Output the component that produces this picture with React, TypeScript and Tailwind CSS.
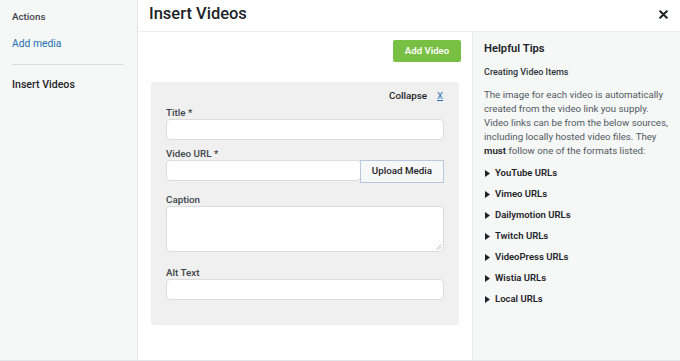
import React from "react";

const tips = [
  "YouTube URLs",
  "Vimeo URLs",
  "Dailymotion URLs",
  "Twitch URLs",
  "VideoPress URLs",
  "Wistia URLs",
  "Local URLs",
];

export default function App() {
  return (
    <div
      className="w-[680px] h-[361px] flex bg-white border-b border-[#e2e4e7] overflow-hidden text-[#1d2327]"
      style={{ fontFamily: "Roboto, 'Liberation Sans', sans-serif" }}
    >
      {/* Sidebar */}
      <div className="w-[138px] shrink-0 bg-[#f6f7f7] border-r border-[#e2e4e7] px-3 pt-[10px]">
        <div className="text-[9.8px] font-medium leading-[14px] text-[#3c434a]">Actions</div>
        <div className="mt-[13px] text-[10.3px] leading-[14px] text-[#2271b1]">Add media</div>
        <div className="mt-[13px] h-px bg-[#dcdcde] mr-[2px]" />
        <div className="mt-[13px] text-[10.6px] leading-[14px] font-medium text-[#1d2327]">Insert Videos</div>
      </div>

      {/* Main */}
      <div className="flex-1 flex flex-col">
        <div className="h-[32px] shrink-0 border-b border-[#f0f0f1] flex items-center justify-between pl-[11px] pr-[13px]">
          <h1 className="text-[16.5px] font-medium leading-none pb-[2px]">Insert Videos</h1>
          <svg width="9" height="9" viewBox="0 0 9 9" className="mb-[2px] mr-[-1px]">
            <path d="M1.2 1.2 L7.8 7.8 M7.8 1.2 L1.2 7.8" stroke="#1d2327" strokeWidth="2" strokeLinecap="round" />
          </svg>
        </div>

        <div className="flex-1 flex">
          {/* Left pane */}
          <div className="flex-1 px-[13px] pt-[8px]">
            <div className="flex justify-end mr-[-2px]">
              <button className="h-[22px] w-[68px] rounded-[2px] bg-[#77c043] text-white text-[9.6px] font-semibold">
                Add Video
              </button>
            </div>
            <div className="mt-[20px] bg-[#f0f0f1] rounded-[2px] px-[15px] pt-[7px] pb-[25px]">
              <div className="flex justify-end items-center h-[14px] pr-[1px]">
                <span className="text-[9.8px] font-medium text-[#1d2327]">Collapse</span>
                <span className="ml-[10px] text-[9.5px] text-[#2271b1] underline">X</span>
              </div>
              <div className="mt-[3px] text-[9.8px] font-medium leading-[13px] text-[#3c434a]">Title *</div>
              <div className="h-[21px] bg-white border border-[#dcdcde] rounded-[4px]" />
              <div className="mt-[8px] text-[9.8px] font-medium leading-[12px] text-[#3c434a]">Video URL *</div>
              <div className="flex h-[23px]">
                <div className="flex-1 h-[21px] bg-white border border-[#dcdcde] rounded-[4px]" />
                <button className="w-[84px] h-[23px] ml-[-1px] bg-[#f6f7f7] border border-[#b8c7dd] text-[9.8px] font-medium text-[#1d2327]">
                  Upload Media
                </button>
              </div>
              <div className="mt-[11px] text-[9.8px] font-medium leading-[12px] text-[#3c434a]">Caption</div>
              <div className="relative h-[46px] bg-white border border-[#dcdcde] rounded-[4px]">
                <svg width="6" height="6" viewBox="0 0 6 6" className="absolute right-[1px] bottom-[1px]">
                  <path d="M5.5 0.5 L0.5 5.5 M5.5 3 L3 5.5" stroke="#9ca3af" strokeWidth="0.7" />
                </svg>
              </div>
              <div className="mt-[15px] text-[9.8px] font-medium leading-[12px] text-[#3c434a]">Alt Text</div>
              <div className="h-[21px] bg-white border border-[#dcdcde] rounded-[4px]" />
            </div>
          </div>

          {/* Right pane */}
          <div className="w-[208px] shrink-0 bg-[#f6f7f7] border-l border-[#ebebeb] pl-[11px] pr-[8px] pt-[9px]">
            <div className="text-[11.2px] font-semibold leading-[16px] text-[#1d2327]">Helpful Tips</div>
            <div className="mt-[9px] text-[9px] font-medium leading-[12px] text-[#2c3338]">Creating Video Items</div>
            <p className="mt-[10px] text-[9.7px] leading-[14px] text-[#50575e]">
              The image for each video is automatically created from the video link you supply. Video links can be from
              the below sources, including locally hosted video files. They <b className="font-semibold text-[#1d2327]">must</b> follow
              one of the formats listed:
            </p>
            <ul className="mt-[5px]">
              {tips.map((t) => (
                <li key={t} className="flex items-center h-[21px]">
                  <svg width="5" height="7" viewBox="0 0 5 7" className="ml-[1px] mr-[5px]">
                    <path d="M0 0 L5 3.5 L0 7 Z" fill="#1d2327" />
                  </svg>
                  <span className="text-[9.5px] font-semibold text-[#1d2327]">{t}</span>
                </li>
              ))}
            </ul>
          </div>
        </div>
      </div>
    </div>
  );
}
